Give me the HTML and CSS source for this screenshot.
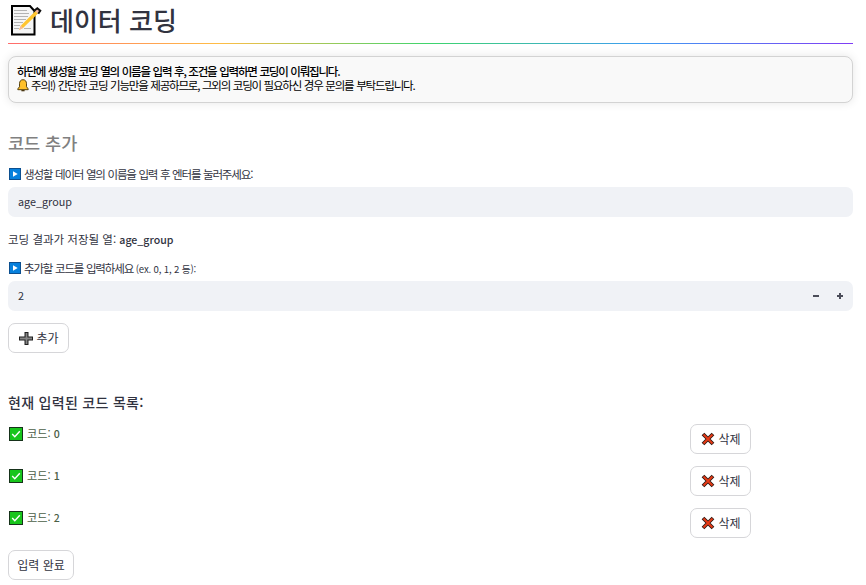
FILE: index.html
```html
<!DOCTYPE html>
<html lang="ko">
<head>
<meta charset="utf-8">
<title>데이터 코딩</title>
<link rel="stylesheet" href="styles.css">
</head>
<body>
<svg class="defs" aria-hidden="true">
  <symbol id="play" viewBox="0 0 12 12"><path fill="#0c4f8f" d="M0 0h12v12H0z"/><path fill="#0780dc" d="M1 1h10v10H1z"/><path fill="#fff" d="M4 3.3 8.7 6 4 8.7z"/></symbol>
  <symbol id="check" viewBox="0 0 14 14"><path fill="#16321a" d="M0 0h14v14H0z"/><path fill="#18c51c" d="M1 1h12v12H1z"/><path d="m3.2 7 2.6 2.7 5-5.4" fill="none" stroke="#fff" stroke-width="1.4"/></symbol>
  <symbol id="cross" viewBox="0 0 14 14"><path d="m2 2 10 10m0-10-10 10" stroke="#2c1813" stroke-width="3.8"/><path d="m2.5 2.5 9 9m0-9-9 9" stroke="#e63a16" stroke-width="2"/></symbol>
  <symbol id="plus" viewBox="0 0 14 14"><path d="M7.5 1v13M0 7.5h14" stroke="#202020" stroke-width="4"/><path d="M7.5 2v11M1 7.5h12" stroke="#858585" stroke-width="1.8"/></symbol>
</svg>
<main>
  <h1>
    <svg class="memo" viewBox="0 0 32 32"><path d="M2 2h18l4.500 5v23.500H2z" fill="#f5f5f5" stroke="#000" stroke-width="2"/><path d="M4 6.500h13M4 9.500h15M4 12.500h14M4 15.500h12M4 18.500h9M4 21.500h6M4 24.500h5M14 24.500h7" stroke="#b3b3b3"/><path d="m9 26 2-4.500L25.500 7l2.500 2.500L13 24z" fill="#ffc52f"/><path d="m9 26 2-4.500 2 2.500z" fill="#f8b99b"/><path d="m24.500 6.500 2.800-2.300 3 2.600-2 3" fill="#f5b5a0" stroke="#111" stroke-width="2"/></svg>
    <span>데이터 코딩</span>
  </h1>
  <hr>
  <section class="notice">
    <strong>하단에 생성할 코딩 열의 이름을 입력 후, 조건을 입력하면 코딩이 이뤄집니다.</strong>
    <p><svg class="bell" viewBox="0 0 12 13"><path d="M6 .7c2.300 0 3.500 1.700 3.500 4v3l1.700 2.200v.8H.8v-.8l1.700-2.200v-3c0-2.300 1.200-4 3.500-4z" fill="#ffc12b" stroke="#453100" stroke-width=".9"/><path d="M4.400 11h3.200v1.300H4.400z" fill="#4a3712"/></svg><span>주의!) 간단한 코딩 기능만을 제공하므로, 그외의 코딩이 필요하신 경우 문의를 부탁드립니다.</span></p>
  </section>
  <h2><span>코드 추가</span></h2>
  <label class="label"><svg><use href="#play"/></svg><span>생성할 데이터 열의 이름을 입력 후 엔터를 눌러주세요:</span></label>
  <div class="field"><span>age_group</span></div>
  <p class="result"><span>코딩 결과가 저장될 열: <b>age_group</b></span></p>
  <label class="label"><svg><use href="#play"/></svg><span>추가할 코드를 입력하세요 <small>(ex. 0, 1, 2 등):</small></span></label>
  <div class="field"><span>2</span>
    <svg class="steps" viewBox="0 0 32 8"><path d="M1 4h6m18 0h6m-3-3v6" stroke="#4b4d59" stroke-width="2"/></svg>
  </div>
  <button class="add"><svg><use href="#plus"/></svg><span>추가</span></button>
  <h3><span>현재 입력된 코드 목록:</span></h3>
  <div class="row"><div class="code"><svg><use href="#check"/></svg><span>코드: <b>0</b></span></div><button><svg><use href="#cross"/></svg><span>삭제</span></button></div>
  <div class="row"><div class="code"><svg><use href="#check"/></svg><span>코드: <b>1</b></span></div><button><svg><use href="#cross"/></svg><span>삭제</span></button></div>
  <div class="row"><div class="code"><svg><use href="#check"/></svg><span>코드: <b>2</b></span></div><button><svg><use href="#cross"/></svg><span>삭제</span></button></div>
  <button class="done"><span>입력 완료</span></button>
</main>
</body>
</html>
```

FILE: styles.css
```css
* { box-sizing: border-box; }
body { margin: 0; background: #fff; color: #31333f; font: 12px/14px "Noto Sans CJK KR", sans-serif; overflow: hidden; }
.defs { position: absolute; width: 0; height: 0; }
main { width: 845px; margin-left: 8px; }
h1, h2, h3, p { margin: 0; }
span { white-space: pre; }
svg { display: block; flex: none; }
b { font-weight: 500; }
h1 { display: flex; height: 43px; padding-left: 2px; font-size: 26px; font-weight: 500; line-height: 40px; }
.memo { width: 32px; height: 32px; margin: 4px 8px 0 0; }
hr { height: 1px; margin: 0; border: 0; background: linear-gradient(90deg, #ff6c6c, #ffbd45 25%, #3dd56d 50%, #3d9df3 75%, #803df5); }
.notice { height: 47px; margin-top: 12px; padding: 7px; border: 1px solid #d3d3d3; border-radius: 8px; background: #f9f9f9; box-shadow: 0 0 10px #0000001a; color: #000; font-size: 11.5px; letter-spacing: -1.2px; word-spacing: .7px; }
.notice strong { display: block; padding-left: 1px; font-weight: 500; white-space: pre; }
.notice p { display: flex; }
.bell { width: 12px; height: 13px; margin: 1px 2px 0 1px; }
h2 { height: 24px; margin-top: 28px; color: #808080; font-size: 17.5px; font-weight: 500; line-height: 24px; }
.label { display: flex; align-items: center; height: 14px; margin-top: 12px; font-size: 11.5px; letter-spacing: -1.15px; word-spacing: .6px; }
.label svg { width: 12px; height: 12px; margin: 0 3px 0 1px; }
small { font-size: 9.6px; letter-spacing: -.15px; word-spacing: 0; }
.field { display: flex; align-items: center; justify-content: space-between; height: 30px; margin-top: 6px; padding: 0 9px 0 10px; border-radius: 7px; background: #f0f2f6; font-size: 10.8px; }
.field span { margin-top: -2px; }
.steps { width: 32px; height: 8px; }
.result { height: 14px; margin-top: 15px; font-size: 11.5px; }
.result b { font-size: 10.6px; }
.result + .label { margin-top: 15px; }
button { display: flex; align-items: center; justify-content: center; width: 61px; height: 30px; padding: 0; border: 1px solid #d6d6d9; border-radius: 7px; background: #fff; color: #31333f; font: 12px/14px "Noto Sans CJK KR", sans-serif; }
button svg { width: 14px; height: 14px; margin: 0 3px 0 1px; }
.add { margin-top: 12px; }
h3 { height: 20px; margin: 39px 0 12px; font-size: 14px; font-weight: 500; letter-spacing: .3px; line-height: 20px; }
.row { display: grid; grid-template-columns: 682px 61px; height: 42px; }
.code { display: flex; align-items: center; height: 20px; padding-left: 1px; color: #4b6047; font-size: 11.2px; }
.code svg { width: 14px; height: 14px; margin-right: 4px; }
.code b { font-size: 10.6px; }
.code span { margin-top: -2px; }
.done { width: 66px; }
```
